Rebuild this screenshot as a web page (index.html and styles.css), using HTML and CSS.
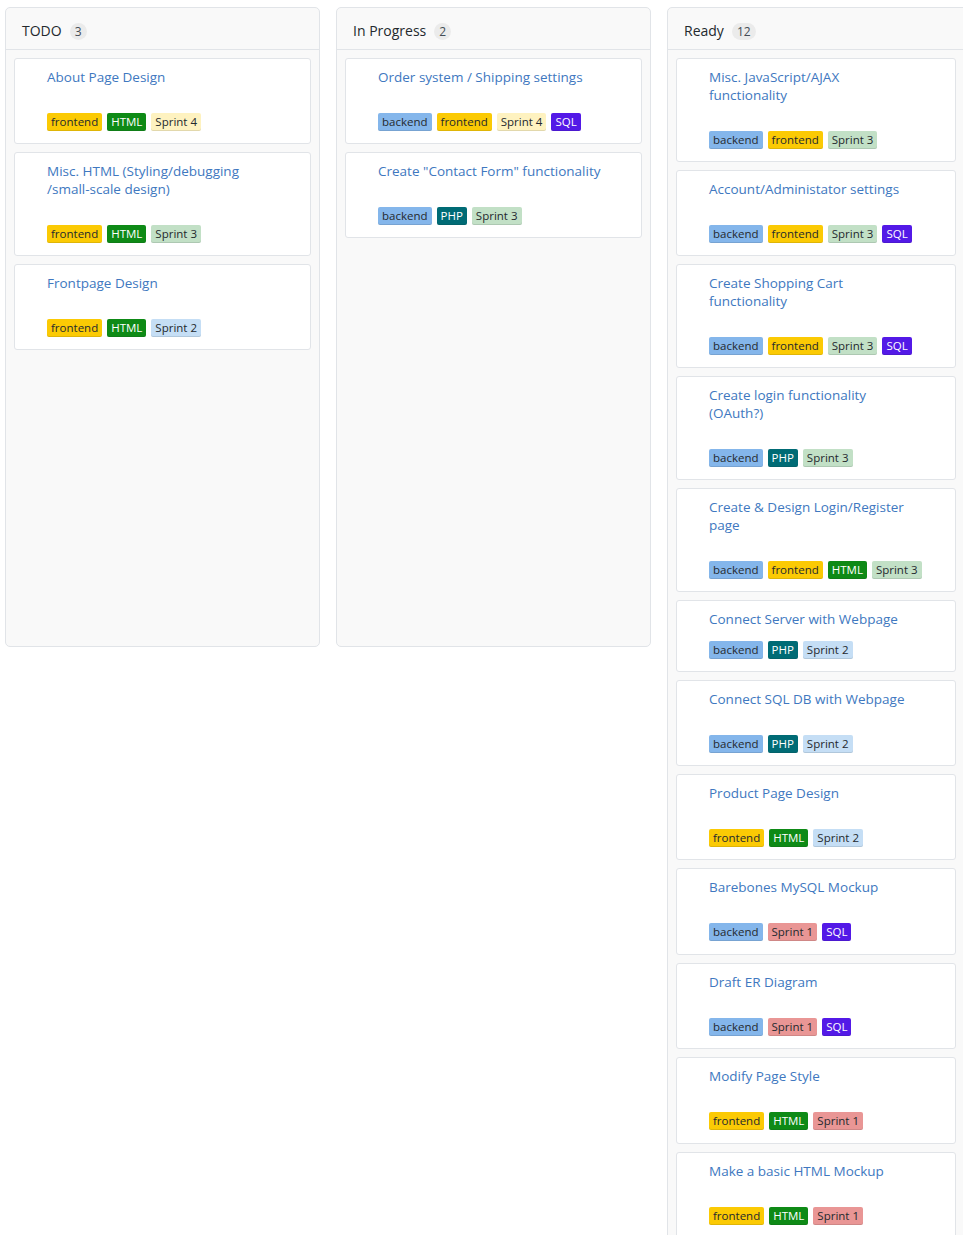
FILE: index.html
```html
<!DOCTYPE html>
<html lang="en">
<head>
<meta charset="utf-8">
<title>Project board</title>
<link rel="stylesheet" href="styles.css">
</head>
<body>
<div class="board">
  <section class="column">
    <header class="col-head"><span class="col-title">TODO</span><span class="counter">3</span></header>
    <div class="cards">
      <article class="card">
        <a class="card-title">About Page Design</a>
        <div class="labels"><span class="label l-frontend">frontend</span><span class="label l-html">HTML</span><span class="label l-s4">Sprint 4</span></div>
      </article>
      <article class="card">
        <a class="card-title">Misc. HTML (Styling/debugging /small-scale design)</a>
        <div class="labels"><span class="label l-frontend">frontend</span><span class="label l-html">HTML</span><span class="label l-s3">Sprint 3</span></div>
      </article>
      <article class="card">
        <a class="card-title">Frontpage Design</a>
        <div class="labels"><span class="label l-frontend">frontend</span><span class="label l-html">HTML</span><span class="label l-s2">Sprint 2</span></div>
      </article>
    </div>
  </section>

  <section class="column">
    <header class="col-head"><span class="col-title">In Progress</span><span class="counter">2</span></header>
    <div class="cards">
      <article class="card">
        <a class="card-title">Order system / Shipping settings</a>
        <div class="labels"><span class="label l-backend">backend</span><span class="label l-frontend">frontend</span><span class="label l-s4">Sprint 4</span><span class="label l-sql">SQL</span></div>
      </article>
      <article class="card">
        <a class="card-title">Create "Contact Form" functionality</a>
        <div class="labels"><span class="label l-backend">backend</span><span class="label l-php">PHP</span><span class="label l-s3">Sprint 3</span></div>
      </article>
    </div>
  </section>

  <section class="column column-tall">
    <header class="col-head"><span class="col-title">Ready</span><span class="counter">12</span></header>
    <div class="cards cards-scroll">
      <article class="card">
        <a class="card-title">Misc. JavaScript/AJAX functionality</a>
        <div class="labels"><span class="label l-backend">backend</span><span class="label l-frontend">frontend</span><span class="label l-s3">Sprint 3</span></div>
      </article>
      <article class="card">
        <a class="card-title">Account/Administator settings</a>
        <div class="labels"><span class="label l-backend">backend</span><span class="label l-frontend">frontend</span><span class="label l-s3">Sprint 3</span><span class="label l-sql">SQL</span></div>
      </article>
      <article class="card">
        <a class="card-title">Create Shopping Cart functionality</a>
        <div class="labels"><span class="label l-backend">backend</span><span class="label l-frontend">frontend</span><span class="label l-s3">Sprint 3</span><span class="label l-sql">SQL</span></div>
      </article>
      <article class="card">
        <a class="card-title">Create login functionality (OAuth?)</a>
        <div class="labels"><span class="label l-backend">backend</span><span class="label l-php">PHP</span><span class="label l-s3">Sprint 3</span></div>
      </article>
      <article class="card">
        <a class="card-title">Create &amp; Design Login/Register page</a>
        <div class="labels"><span class="label l-backend">backend</span><span class="label l-frontend">frontend</span><span class="label l-html">HTML</span><span class="label l-s3">Sprint 3</span></div>
      </article>
      <article class="card card-compact">
        <a class="card-title">Connect Server with Webpage</a>
        <div class="labels"><span class="label l-backend">backend</span><span class="label l-php">PHP</span><span class="label l-s2">Sprint 2</span></div>
      </article>
      <article class="card">
        <a class="card-title">Connect SQL DB with Webpage</a>
        <div class="labels"><span class="label l-backend">backend</span><span class="label l-php">PHP</span><span class="label l-s2">Sprint 2</span></div>
      </article>
      <article class="card">
        <a class="card-title">Product Page Design</a>
        <div class="labels"><span class="label l-frontend">frontend</span><span class="label l-html">HTML</span><span class="label l-s2">Sprint 2</span></div>
      </article>
      <article class="card card-tall">
        <a class="card-title">Barebones MySQL Mockup</a>
        <div class="labels"><span class="label l-backend">backend</span><span class="label l-s1">Sprint 1</span><span class="label l-sql">SQL</span></div>
      </article>
      <article class="card">
        <a class="card-title">Draft ER Diagram</a>
        <div class="labels"><span class="label l-backend">backend</span><span class="label l-s1">Sprint 1</span><span class="label l-sql">SQL</span></div>
      </article>
      <article class="card card-tall">
        <a class="card-title">Modify Page Style</a>
        <div class="labels"><span class="label l-frontend">frontend</span><span class="label l-html">HTML</span><span class="label l-s1">Sprint 1</span></div>
      </article>
      <article class="card">
        <a class="card-title">Make a basic HTML Mockup</a>
        <div class="labels"><span class="label l-frontend">frontend</span><span class="label l-html">HTML</span><span class="label l-s1">Sprint 1</span></div>
      </article>
    </div>
  </section>
</div>
</body>
</html>
```

FILE: styles.css
```css
* { box-sizing: border-box; }

html, body {
  margin: 0;
  padding: 0;
  background: #ffffff;
}

body {
  font-family: "Open Sans", "Noto Sans", "Liberation Sans", sans-serif;
  font-size: 13px;
  color: #24292e;
  overflow: hidden;
}

.board {
  display: flex;
  align-items: flex-start;
  gap: 16px;
  padding: 7px 0 0 5px;
  width: 1100px;
}

.column {
  flex: 0 0 315px;
  width: 315px;
  height: 640px;
  background: #f9f9f9;
  border: 1px solid #e1e4e8;
  border-radius: 5px;
  display: flex;
  flex-direction: column;
}

.column-tall {
  height: 1300px;
}

.col-head {
  height: 42px;
  border-bottom: 1px solid #e1e4e8;
  display: flex;
  align-items: center;
  padding: 3px 16px 0;
  gap: 8px;
}

.col-title {
  font-size: 14px;
  color: #24292e;
}

.counter {
  display: inline-block;
  font-size: 12px;
  line-height: 17px;
  margin-top: 2px;
  padding: 0 5px;
  border-radius: 10px;
  background: #ebebeb;
  color: #444d56;
}

.cards {
  display: flex;
  flex-direction: column;
  gap: 8px;
  padding: 8px;
}

.cards-scroll {
  padding-right: 25px;
}

.card {
  background: #ffffff;
  border: 1px solid #e1e4e8;
  border-radius: 3px;
  padding: 9px 36px 12px 32px;
  display: flex;
  flex-direction: column;
  gap: 27px;
}

.card-compact {
  gap: 13px;
}

.card-tall {
  padding-bottom: 13px;
}

.card-title {
  font-size: 13.5px;
  line-height: 18px;
  color: #4078c0;
  text-decoration: none;
}

.labels {
  display: flex;
  flex-wrap: nowrap;
  gap: 5px;
  height: 18px;
  white-space: nowrap;
}

.label {
  flex: 0 0 auto;
  display: inline-block;
  font-size: 11.5px;
  line-height: 18px;
  height: 18px;
  padding: 0 4px;
  border-radius: 2px;
  color: #24292e;
  box-shadow: inset 0 -1px 0 rgba(27, 31, 35, 0.12);
}

.l-frontend { background: #fbca04; }
.l-backend { background: #84b6eb; }
.l-html { background: #0e8a16; color: #ffffff; }
.l-php { background: #006b75; color: #ffffff; }
.l-sql { background: #5319e7; color: #ffffff; }
.l-s4 { background: #fef2c0; }
.l-s3 { background: #c2e0c6; }
.l-s2 { background: #c5def5; }
.l-s1 { background: #e99695; }
```
